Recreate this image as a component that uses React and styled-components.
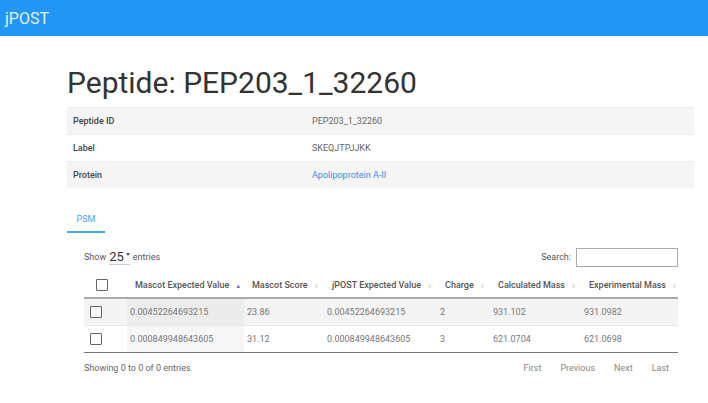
import React from 'react';
import styled, { createGlobalStyle } from 'styled-components';

const Global = createGlobalStyle`
  body { margin: 0; background: #fff; font-family: Roboto, "Liberation Sans", sans-serif; }
`;

// ヘッダー
const TopBar = styled.header`
  height: 36px;
  background: #2196f3;
  display: flex;
  align-items: center;
  padding-left: 5px;
  color: #e3f2fd;
  font-size: 16px;
  margin-bottom: 27px;
`;

const Page = styled.main`
  width: 627px;
  margin-left: 67px;
`;

const Title = styled.h1`
  margin: 0 0 4px;
  font-size: 30px;
  font-weight: 400;
  color: #333;
  line-height: 40px;
`;

const InfoTable = styled.div`
  display: grid;
  grid-template-columns: 245px 1fr;
  font-size: 9px;
`;

const InfoRow = styled.div`
  display: contents;
  & > div {
    background: ${p => (p.$shade ? '#f5f5f5' : '#fff')};
    height: 26px;
    display: flex;
    align-items: center;
    border-top: 1px solid #eee;
  }
`;

const InfoKey = styled.div`
  padding-left: 6px;
  color: #444;
  font-weight: 500;
`;

const InfoVal = styled.div`
  color: ${p => (p.$link ? '#3a8ee6' : '#666')};
`;

const Tabs = styled.div`
  margin-top: 20px;
  display: flex;
`;

const Tab = styled.div`
  width: 38px;
  padding: 6px 0 7px;
  text-align: center;
  font-size: 9px;
  color: #42a5f5;
  border-bottom: 2px solid #42a5f5;
`;

const Panel = styled.section`
  padding: 13px 16px 0 17px;
`;

const Controls = styled.div`
  display: flex;
  justify-content: space-between;
  align-items: center;
  font-size: 9px;
  color: #555;
  height: 22px;
`;

const Length = styled.span`
  display: flex;
  align-items: center;
  gap: 3px;
`;

const Select = styled.span`
  font-size: 13px;
  color: #333;
  border-bottom: 1px solid #ccc;
  padding-right: 6px;
  position: relative;
  &::after {
    content: '';
    position: absolute;
    right: 0;
    top: 4px;
    border-left: 2px solid transparent;
    border-right: 2px solid transparent;
    border-top: 3px solid #555;
  }
`;

const Search = styled.label`
  display: flex;
  align-items: center;
  gap: 5px;
`;

const SearchBox = styled.span`
  display: block;
  width: 100px;
  height: 17px;
  border: 1px solid #aaa;
`;

const Table = styled.table`
  width: 100%;
  table-layout: fixed;
  margin-top: 5px;
  border-collapse: collapse;
  font-size: 9px;
  border-bottom: 1px solid #777;
`;

const Th = styled.th`
  box-sizing: border-box;
  height: 25px;
  text-align: left;
  padding: 0 0 0 ${p => (p.$box ? 12 : 8)}px;
  color: #555;
  font-weight: 500;
  border-bottom: 2px solid #aaa;
  white-space: nowrap;
  overflow: hidden;
  width: ${p => p.$w}px;
`;

const Td = styled.td`
  height: 26px;
  padding: 0 0 0 ${p => (p.$box ? 6 : 3)}px;
  color: #777;
  background: ${p => (p.$sorted ? (p.$odd ? '#ececec' : '#f6f6f6') : 'transparent')};
`;

const Tr = styled.tr`
  background: ${p => (p.$odd ? '#f4f4f4' : '#fff')};
  border-top: ${p => (p.$odd ? 'none' : '1px solid #e8e8e8')};
`;

const Box = styled.span`
  display: block;
  width: 10px;
  height: 10px;
  border: 1.5px solid #666;
  border-radius: 1px;
`;

const Sort = styled.span`
  display: inline-block;
  margin-left: 6px;
  vertical-align: middle;
  font-size: 6px;
  line-height: 4px;
  color: ${p => (p.$active ? '#7e6fc4' : '#ddd')};
`;

const Footer = styled.div`
  display: flex;
  justify-content: space-between;
  align-items: center;
  height: 30px;
  font-size: 9px;
  color: #666;
`;

const Pager = styled.div`
  display: flex;
  gap: 19px;
  padding-right: 9px;
  color: #888;
`;

const cols = [
  ['Mascot Expected Value', 117, true],
  ['Mascot Score', 80],
  ['jPOST Expected Value', 113],
  ['Charge', 53],
  ['Calculated Mass', 91],
  ['Experimental Mass', 97],
];

const rows = [
  ['0.00452264693215', '23.86', '0.00452264693215', '2', '931.102', '931.0982'],
  ['0.000849948643605', '31.12', '0.000849948643605', '3', '621.0704', '621.0698'],
];

export default function App() {
  return (
    <>
      <Global />
      <TopBar>jPOST</TopBar>
      <Page>
        <Title>Peptide: PEP203_1_32260</Title>
        <InfoTable>
          <InfoRow $shade>
            <InfoKey>Peptide ID</InfoKey>
            <InfoVal>PEP203_1_32260</InfoVal>
          </InfoRow>
          <InfoRow>
            <InfoKey>Label</InfoKey>
            <InfoVal>SKEQJTPJJKK</InfoVal>
          </InfoRow>
          <InfoRow $shade>
            <InfoKey>Protein</InfoKey>
            <InfoVal $link>Apolipoprotein A-II</InfoVal>
          </InfoRow>
        </InfoTable>

        <Tabs>
          <Tab>PSM</Tab>
        </Tabs>

        <Panel>
          <Controls>
            <Length>
              Show <Select>25</Select> entries
            </Length>
            <Search>
              Search: <SearchBox />
            </Search>
          </Controls>

          <Table>
            <thead>
              <tr>
                <Th $box $w={43}><Box /></Th>
                {cols.map(([name, w, active]) => (
                  <Th key={name} $w={w}>
                    {name}
                    <Sort $active={active}>{active ? '▲' : '⬍'}</Sort>
                  </Th>
                ))}
              </tr>
            </thead>
            <tbody>
              {rows.map((r, i) => (
                <Tr key={i} $odd={i % 2 === 0}>
                  <Td $box><Box /></Td>
                  {r.map((v, j) => (
                    <Td key={j} $sorted={j === 0} $odd={i % 2 === 0}>{v}</Td>
                  ))}
                </Tr>
              ))}
            </tbody>
          </Table>

          <Footer>
            <span>Showing 0 to 0 of 0 entries</span>
            <Pager>
              <span>First</span>
              <span>Previous</span>
              <span>Next</span>
              <span>Last</span>
            </Pager>
          </Footer>
        </Panel>
      </Page>
    </>
  );
}
